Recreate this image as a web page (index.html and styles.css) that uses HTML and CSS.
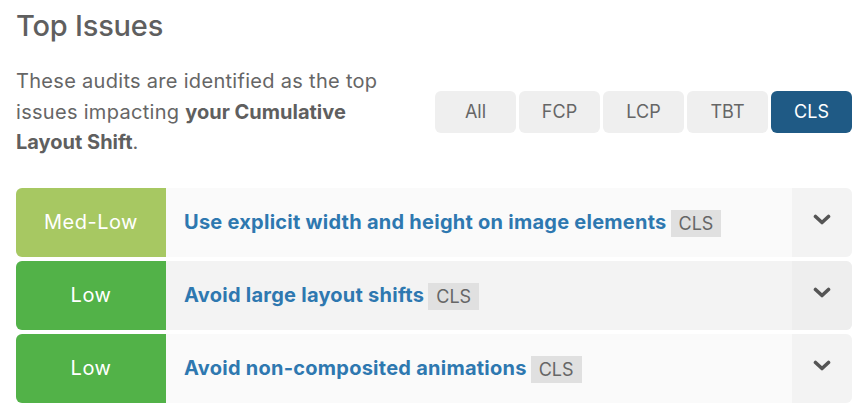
FILE: index.html
```html
<!DOCTYPE html>
<html>
<head>
<meta charset="utf-8">
<link rel="stylesheet" href="styles.css">
</head>
<body>
<div class="page">
  <h2 class="title">Top Issues</h2>
  <div class="intro">
    <p class="desc">These audits are identified as the top issues impacting <strong>your Cumulative Layout Shift</strong>.</p>
    <div class="filters">
      <button class="filter">All</button>
      <button class="filter">FCP</button>
      <button class="filter">LCP</button>
      <button class="filter">TBT</button>
      <button class="filter active">CLS</button>
    </div>
  </div>
  <div class="issues">
    <div class="issue">
      <div class="sev medlow">Med-Low</div>
      <div class="body"><span class="name">Use explicit width and height on image elements</span><span class="tag">CLS</span></div>
      <div class="toggle"><svg width="18" height="12" viewBox="0 0 18 12"><path d="M2.5 2.5 L9 8.5 L15.5 2.5" fill="none" stroke="#555" stroke-width="3.6" stroke-linecap="round" stroke-linejoin="round"/></svg></div>
    </div>
    <div class="issue alt">
      <div class="sev low">Low</div>
      <div class="body"><span class="name">Avoid large layout shifts</span><span class="tag">CLS</span></div>
      <div class="toggle"><svg width="18" height="12" viewBox="0 0 18 12"><path d="M2.5 2.5 L9 8.5 L15.5 2.5" fill="none" stroke="#555" stroke-width="3.6" stroke-linecap="round" stroke-linejoin="round"/></svg></div>
    </div>
    <div class="issue">
      <div class="sev low">Low</div>
      <div class="body"><span class="name">Avoid non-composited animations</span><span class="tag">CLS</span></div>
      <div class="toggle"><svg width="18" height="12" viewBox="0 0 18 12"><path d="M2.5 2.5 L9 8.5 L15.5 2.5" fill="none" stroke="#555" stroke-width="3.6" stroke-linecap="round" stroke-linejoin="round"/></svg></div>
    </div>
  </div>
</div>
</body>
</html>
```

FILE: styles.css
```css
html, body {
  margin: 0;
  padding: 0;
  background: #ffffff;
}
body {
  font-family: "Inter", "Liberation Sans", sans-serif;
  color: #5f5f5f;
}
.page {
  padding: 6px 14px 0 16px;
}
.title {
  margin: 0;
  font-size: 29px;
  line-height: 40px;
  font-weight: 500;
  color: #5f5f5f;
  letter-spacing: -0.2px;
}
.intro {
  display: flex;
  align-items: center;
  justify-content: space-between;
  margin-top: 20px;
}
.desc {
  margin: 0;
  width: 380px;
  font-size: 20px;
  line-height: 30.5px;
  font-weight: 400;
  color: #666;
  letter-spacing: 0.3px;
}
.desc strong {
  font-weight: 700;
  color: #5f5f5f;
  letter-spacing: 0;
}
.filters {
  display: flex;
  gap: 3px;
}
.filter {
  width: 81px;
  height: 42px;
  border: none;
  border-radius: 6px;
  background: #efefef;
  color: #666;
  font-family: inherit;
  font-size: 18px;
  padding: 0;
}
.filter.active {
  background: #1f5a85;
  color: #fff;
}
.issues {
  margin-top: 30px;
  display: flex;
  flex-direction: column;
  gap: 4px;
}
.issue {
  display: flex;
  height: 69px;
  background: #fafafa;
  border-radius: 6px;
  overflow: hidden;
}
.issue.alt {
  background: #f3f3f3;
}
.sev {
  width: 150px;
  flex: none;
  display: flex;
  align-items: center;
  justify-content: center;
  color: #fff;
  font-size: 20px;
  letter-spacing: 0.5px;
}
.sev.medlow { background: #a7c862; }
.sev.low { background: #52b248; }
.body {
  flex: 1;
  display: flex;
  align-items: center;
  padding-left: 18px;
  gap: 4px;
}
.name {
  font-size: 20px;
  font-weight: 700;
  color: #2e78b0;
  letter-spacing: 0.25px;
}
.tag {
  background: #e0e0e0;
  color: #666;
  font-size: 18px;
  line-height: 27px;
  padding: 0 8px;
  margin-top: 2px;
}
.toggle {
  width: 60px;
  flex: none;
  display: flex;
  align-items: center;
  justify-content: center;
  background: #f3f3f3;
  padding-bottom: 4px;
}
.issue.alt .toggle {
  background: #eeeeee;
}
```
